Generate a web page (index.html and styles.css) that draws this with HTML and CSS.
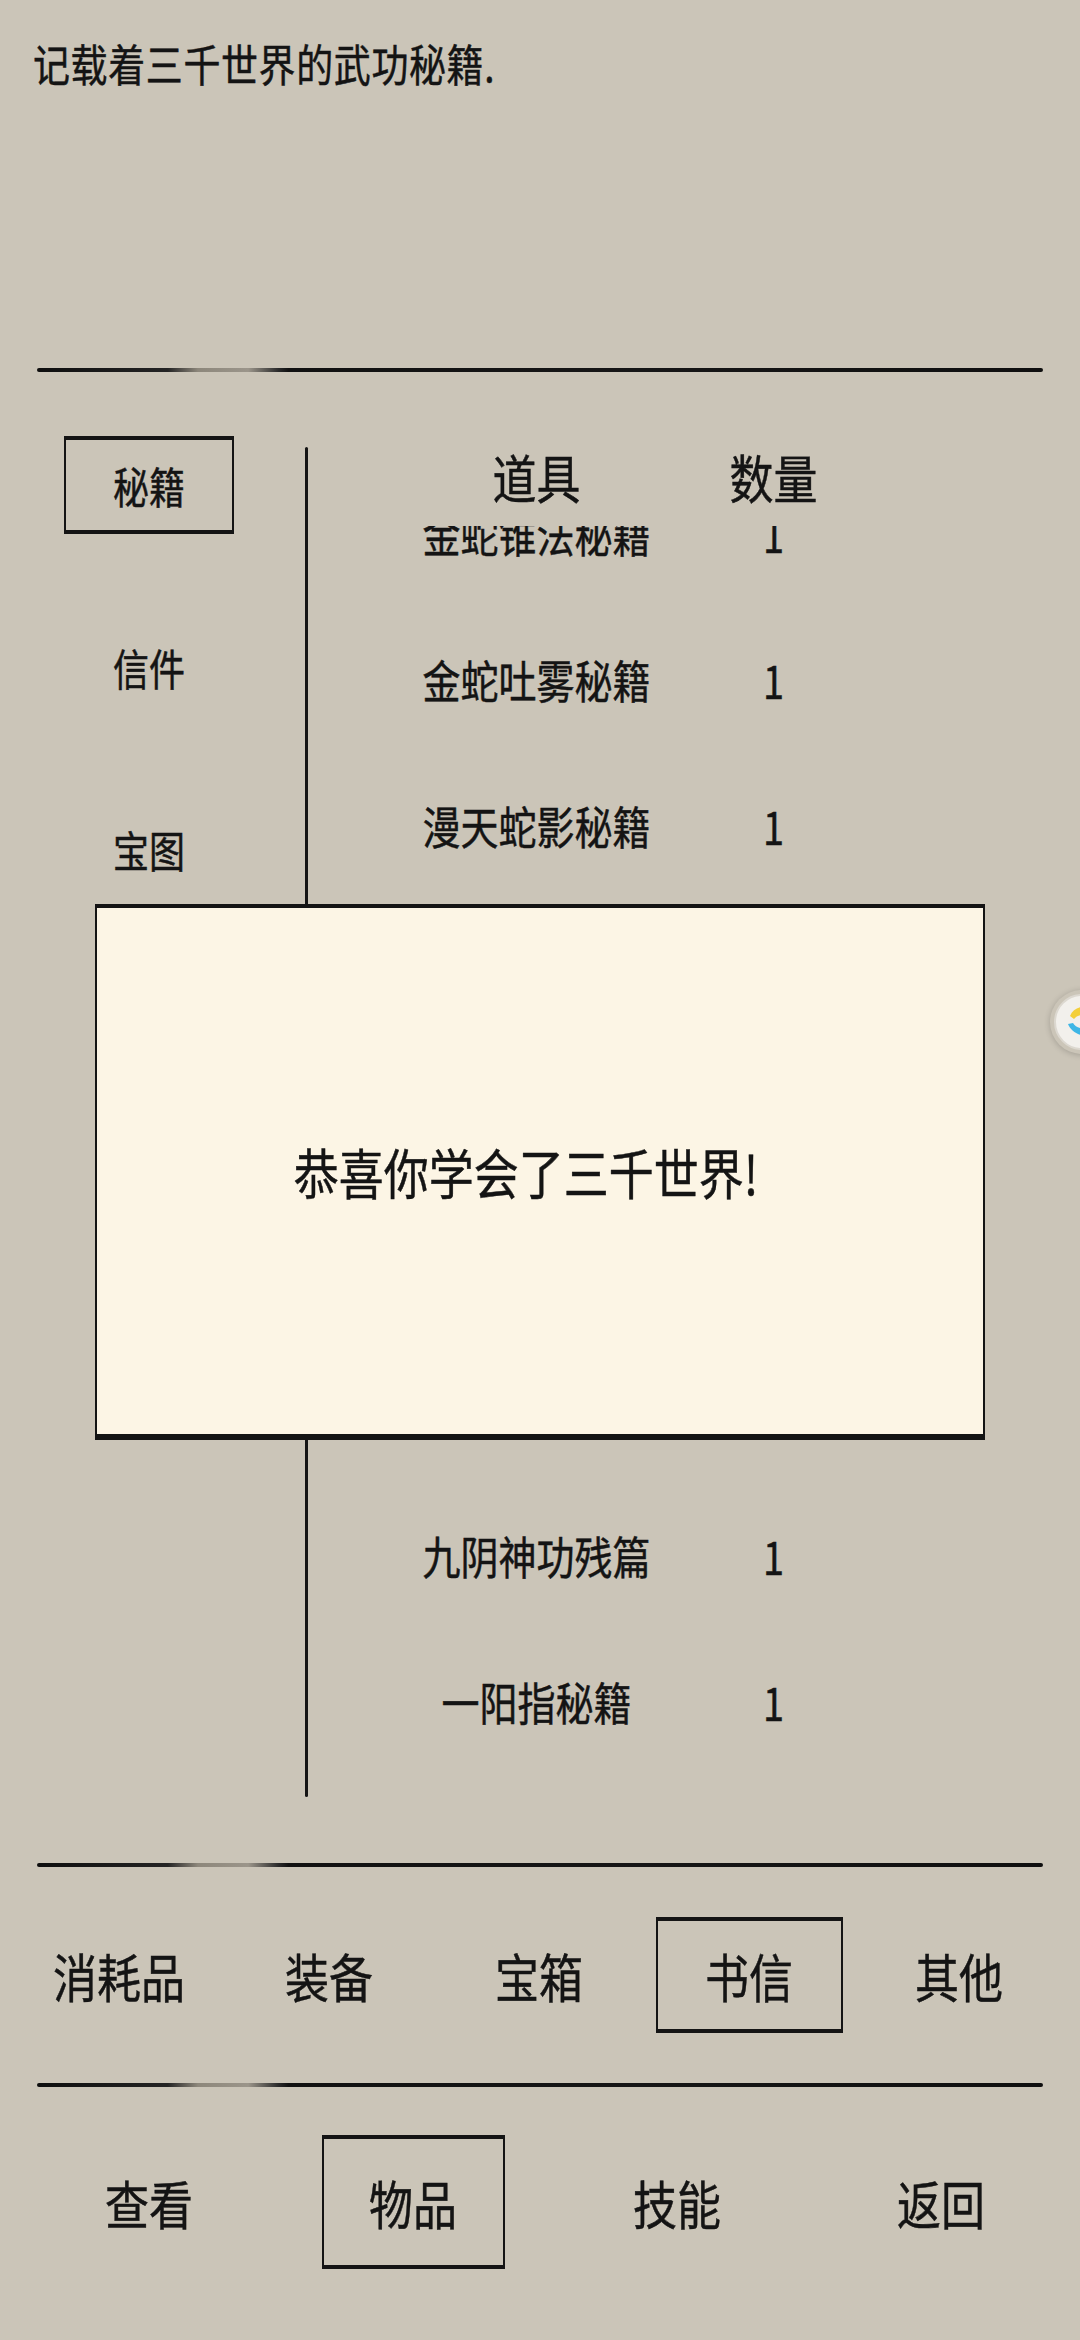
FILE: index.html
```html
<!DOCTYPE html>
<html lang="zh">
<head>
    <meta charset="UTF-8">
    <meta name="viewport" content="width=device-width, initial-scale=1.0">
    <title>物品 - 秘籍</title>
    <link rel="stylesheet" href="styles.css">
</head>
<body>
    <div class="screen">
        <p class="desc"><span class="t">记载着三千世界的武功秘籍.</span></p>
        <div class="rule"></div>

        <div class="bag">
            <div class="cats">
                <div class="cat active"><span class="t">秘籍</span></div>
                <div class="cat"><span class="t">信件</span></div>
                <div class="cat"><span class="t">宝图</span></div>
            </div>
            <div class="vline"></div>
            <div class="items">
                <div class="row head"><span class="t">道具</span><span class="t">数量</span></div>
                <div class="list">
                    <div class="list-inner">
                        <div class="row"><span class="t">金蛇锥法秘籍</span><span class="t">1</span></div>
                        <div class="row"><span class="t">金蛇吐雾秘籍</span><span class="t">1</span></div>
                        <div class="row"><span class="t">漫天蛇影秘籍</span><span class="t">1</span></div>
                        <!-- rows under the popup -->
                        <div class="row"></div>
                        <div class="row"></div>
                        <div class="row"></div>
                        <div class="row"></div>
                        <div class="row"><span class="t">九阴神功残篇</span><span class="t">1</span></div>
                        <div class="row"><span class="t">一阳指秘籍</span><span class="t">1</span></div>
                    </div>
                </div>
            </div>
        </div>

        <div class="rule"></div>
        <div class="subtabs">
            <div class="tab"><span class="t">消耗品</span></div>
            <div class="tab"><span class="t">装备</span></div>
            <div class="tab"><span class="t">宝箱</span></div>
            <div class="tab active"><span class="t">书信</span></div>
            <div class="tab"><span class="t">其他</span></div>
        </div>

        <div class="rule"></div>
        <div class="nav">
            <div class="nav-item"><span class="t">查看</span></div>
            <div class="nav-item active"><span class="t">物品</span></div>
            <div class="nav-item"><span class="t">技能</span></div>
            <div class="nav-item"><span class="t">返回</span></div>
        </div>

        <div class="dialog">
            <span class="t">恭喜你学会了三千世界!</span>
        </div>

        <div class="bubble">
            <svg width="64" height="64" viewBox="0 0 64 64">
                <circle cx="32" cy="32" r="27" fill="#f2f0ec" stroke="#dcd8d0" stroke-width="2"/>
                <path d="M20 26 C24 16 38 14 46 20 L40 28 C35 24 28 24 24 29 Z" fill="#f3cf3a"/>
                <path d="M18 34 C22 44 34 48 44 44 L40 37 C33 40 26 38 23 33 Z" fill="#3fb6e6"/>
            </svg>
        </div>
    </div>
</body>
</html>
```

FILE: styles.css
```css
body {
    margin: 0;
    background-color: #cbc5b8;
    font-family: "Noto Sans CJK SC", "Noto Sans", sans-serif;
    color: #141414;
}
.screen {
    position: relative;
    width: 1080px;
    height: 2340px;
    overflow: hidden;
}
/* the game is stretched a bit taller than wide */
.t {
    display: inline-block;
    transform: scaleY(1.2);
    -webkit-text-stroke: 0.4px #141414;
}
.desc {
    margin: 0;
    height: 368px;
    box-sizing: border-box;
    padding: 41px 33px 0;
    font-size: 37px;
    letter-spacing: 0.6px;
    line-height: 44px;
}
.rule {
    height: 4px;
    margin: 0 37px;
    border-radius: 2px;
    background: linear-gradient(to right, #0e0e0e 0%, #242424 13%, #8d877b 16%, #9b958a 21%, #2a2a2a 24%, #111 25%, #161616 60%, #0f0f0f 100%);
}

.bag {
    display: flex;
    align-items: flex-start;
    height: 1491px;
}
.cats {
    width: 305px;
    box-sizing: border-box;
    padding: 64px 0 0 64px;
}
.cat {
    width: 170px;
    height: 98px;
    box-sizing: border-box;
    display: flex;
    align-items: center;
    justify-content: center;
    margin-bottom: 84px;
    font-size: 36px;
    border: 2px solid transparent;
}
.cat.active,
.tab.active,
.nav-item.active {
    border: 2px solid #141414;
    border-top-width: 4px;
    border-bottom-width: 4px;
}
.vline {
    width: 3px;
    height: 1350px;
    margin-top: 75px;
    background-color: #151515;
    border-radius: 2px;
}
.items {
    flex: 1;
    padding-left: 110px;
}
.row {
    display: grid;
    grid-template-columns: 237px 237px;
    justify-items: center;
    align-items: center;
    height: 146px;
    font-size: 38px;
}
.row.head {
    margin-top: 54px;
    height: 100px;
    font-size: 44px;
}
.list {
    height: 1271px;
    overflow: hidden;
}
.list-inner {
    margin-top: -66px;
}

.subtabs {
    display: grid;
    grid-template-columns: repeat(5, 210px);
    justify-items: center;
    align-items: center;
    height: 216px;
    padding-left: 14px;
    font-size: 44px;
}
.tab {
    display: flex;
    align-items: center;
    justify-content: center;
    width: 187px;
    height: 116px;
    box-sizing: border-box;
}
.nav {
    display: grid;
    grid-template-columns: repeat(4, 264px);
    justify-items: center;
    align-items: center;
    height: 230px;
    padding-left: 17px;
    font-size: 44px;
}
.nav-item {
    display: flex;
    align-items: center;
    justify-content: center;
    width: 183px;
    height: 134px;
    box-sizing: border-box;
}

.dialog {
    position: absolute;
    left: 95px;
    top: 904px;
    width: 890px;
    height: 536px;
    box-sizing: border-box;
    padding-right: 28px;
    display: flex;
    align-items: center;
    justify-content: center;
    background-color: #fcf5e5;
    border: 2px solid #141414;
    border-top-width: 4px;
    border-bottom-width: 6px;
    font-size: 45px;
}
.bubble {
    position: absolute;
    left: 1050px;
    top: 990px;
    width: 64px;
    height: 64px;
    border-radius: 50%;
    box-shadow: 0 1px 6px rgba(0, 0, 0, 0.2);
}
.bubble svg {
    display: block;
}
```
